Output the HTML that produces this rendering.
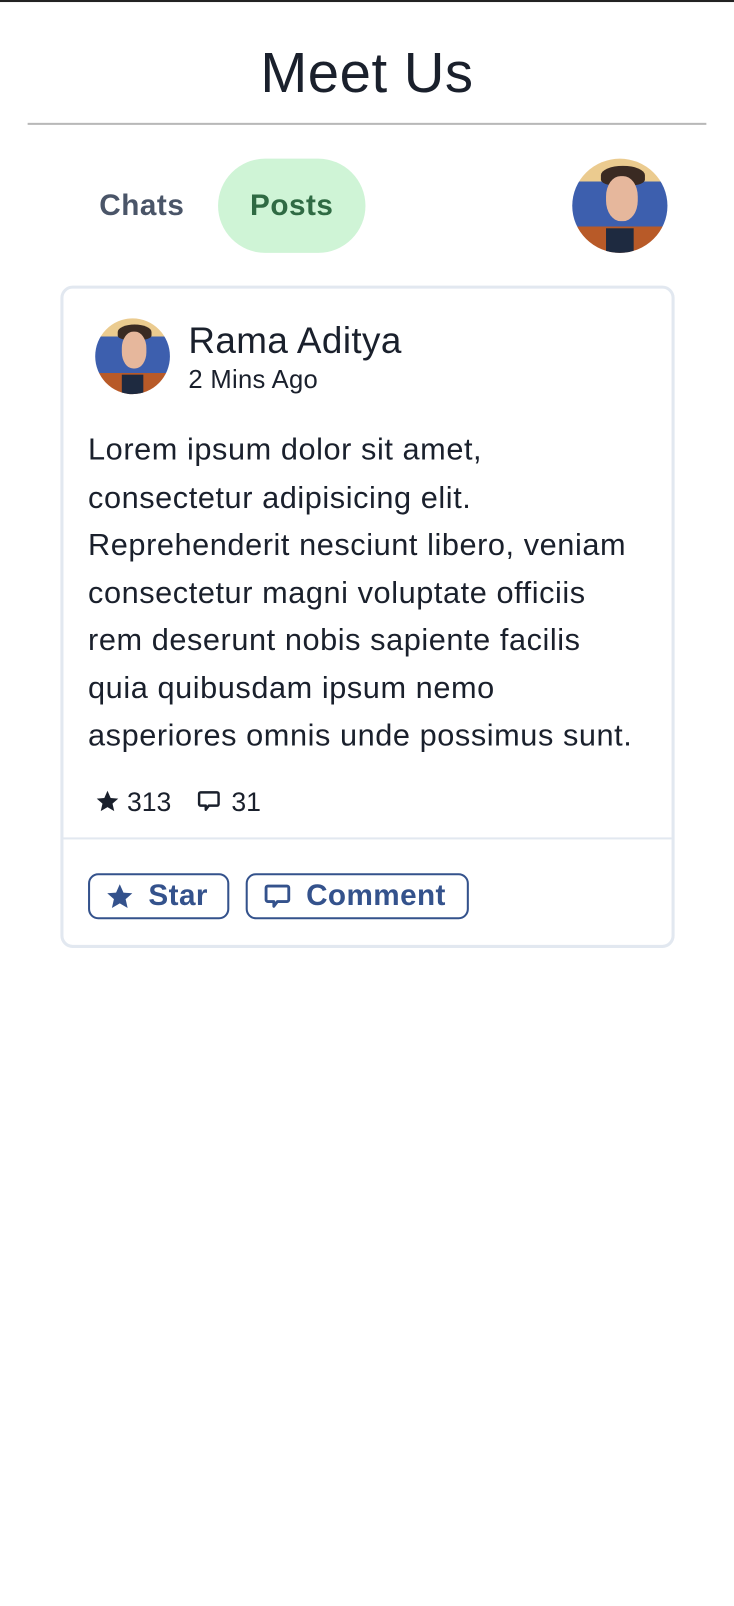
<!DOCTYPE html>
<html><head><meta charset="utf-8">
<style>
html,body{margin:0;padding:0;background:#fff;width:734px;height:1606px;overflow:hidden}
#w{position:absolute;left:0;top:0;width:717px;height:1569px;transform:scale(1.0237);transform-origin:0 0;font-family:"Liberation Sans",sans-serif;color:#1a202c}
.a{position:absolute;white-space:nowrap}
.av{position:absolute;border-radius:50%;overflow:hidden;background:linear-gradient(#ebcb8f 0 24%,#3d5fae 24% 72%,#b85a28 72%)}
.av .f{position:absolute;left:35%;top:18%;width:34%;height:48%;background:#e6b79c;border-radius:45%}
.av .h{position:absolute;left:30%;top:8%;width:46%;height:20%;background:#3a2a22;border-radius:50% 50% 30% 30%}
.av .n{position:absolute;left:36%;top:74%;width:28%;height:30%;background:#1e2a40}
.body{left:86px;top:417px;font-size:30px;line-height:46.5px;letter-spacing:0.55px}
.btn{position:absolute;top:853px;height:45px;border:2px solid #34528c;border-radius:10px;color:#34528c;font-weight:bold;font-size:29px;letter-spacing:0.4px;box-sizing:border-box;display:flex;align-items:center}
</style></head><body>
<div id="w">
<div class="a" style="left:0;top:0;width:717px;height:2px;background:#222"></div>
<div class="a" style="left:0;width:717px;top:38px;text-align:center;font-size:55px;line-height:66px;letter-spacing:0.5px">Meet Us</div>
<div class="a" style="left:27px;top:120px;width:663px;height:2px;background:#b8b8b8"></div>
<div class="a" style="left:97px;top:185px;font-size:29px;letter-spacing:0.5px;font-weight:bold;color:#4a5568">Chats</div>
<div class="a" style="left:213px;top:155px;width:144px;height:92px;border-radius:46px;background:#cff4d6"></div>
<div class="a" style="left:213px;top:185px;width:144px;text-align:center;font-size:29px;letter-spacing:0.5px;font-weight:bold;color:#2f6a43">Posts</div>
<div class="av" style="left:559px;top:155px;width:93px;height:92px"><div class="h"></div><div class="f"></div><div class="n"></div></div>
<div class="a" style="left:59px;top:279px;width:600px;height:647px;border:3px solid #e2e8f0;border-radius:12px;box-sizing:border-box"></div>
<div class="av" style="left:93px;top:311px;width:73px;height:74px"><div class="h"></div><div class="f"></div><div class="n"></div></div>
<div class="a" style="left:184px;top:312px;font-size:36px;letter-spacing:0.4px">Rama Aditya</div>
<div class="a" style="left:184px;top:357px;font-size:25px;letter-spacing:0.3px">2 Mins Ago</div>
<div class="a body">Lorem ipsum dolor sit amet,<br>consectetur adipisicing elit.<br>Reprehenderit nesciunt libero, veniam<br>consectetur magni voluptate officiis<br>rem deserunt nobis sapiente facilis<br>quia quibusdam ipsum nemo<br>asperiores omnis unde possimus sunt.</div>
<svg class="a" style="left:92px;top:771px" width="26" height="24" viewBox="0 0 24 24"><path d="M12 1.5l3.1 7 7.4.6-5.6 4.9 1.7 7.4L12 17.5l-6.6 3.9 1.7-7.4L1.5 9.1l7.4-.6z" fill="#1a202c"/></svg>
<div class="a" style="left:124px;top:768px;font-size:26px">313</div>
<svg class="a" style="left:192px;top:771px" width="24" height="24" viewBox="0 0 24 24"><path d="M4 3h16a1.5 1.5 0 0 1 1.5 1.5v10A1.5 1.5 0 0 1 20 16h-8l-3 4v-4H4a1.5 1.5 0 0 1-1.5-1.5v-10A1.5 1.5 0 0 1 4 3z" fill="none" stroke="#1a202c" stroke-width="2.4" stroke-linejoin="round"/></svg>
<div class="a" style="left:226px;top:768px;font-size:26px">31</div>
<div class="a" style="left:62px;top:818px;width:594px;height:2px;background:#e2e8f0"></div>
<div class="btn" style="left:86px;width:138px"><svg style="margin-left:15px" width="28" height="28" viewBox="0 0 24 24"><path d="M12 1.5l3.1 7 7.4.6-5.6 4.9 1.7 7.4L12 17.5l-6.6 3.9 1.7-7.4L1.5 9.1l7.4-.6z" fill="#34528c"/></svg><span style="margin-left:14px">Star</span></div>
<div class="btn" style="left:240px;width:218px"><svg style="margin-left:15px" width="28" height="28" viewBox="0 0 24 24"><path d="M4 3h16a1.5 1.5 0 0 1 1.5 1.5v10A1.5 1.5 0 0 1 20 16h-8l-3 4v-4H4a1.5 1.5 0 0 1-1.5-1.5v-10A1.5 1.5 0 0 1 4 3z" fill="none" stroke="#34528c" stroke-width="2.4" stroke-linejoin="round"/></svg><span style="margin-left:14px">Comment</span></div>
</div>
</body></html>
